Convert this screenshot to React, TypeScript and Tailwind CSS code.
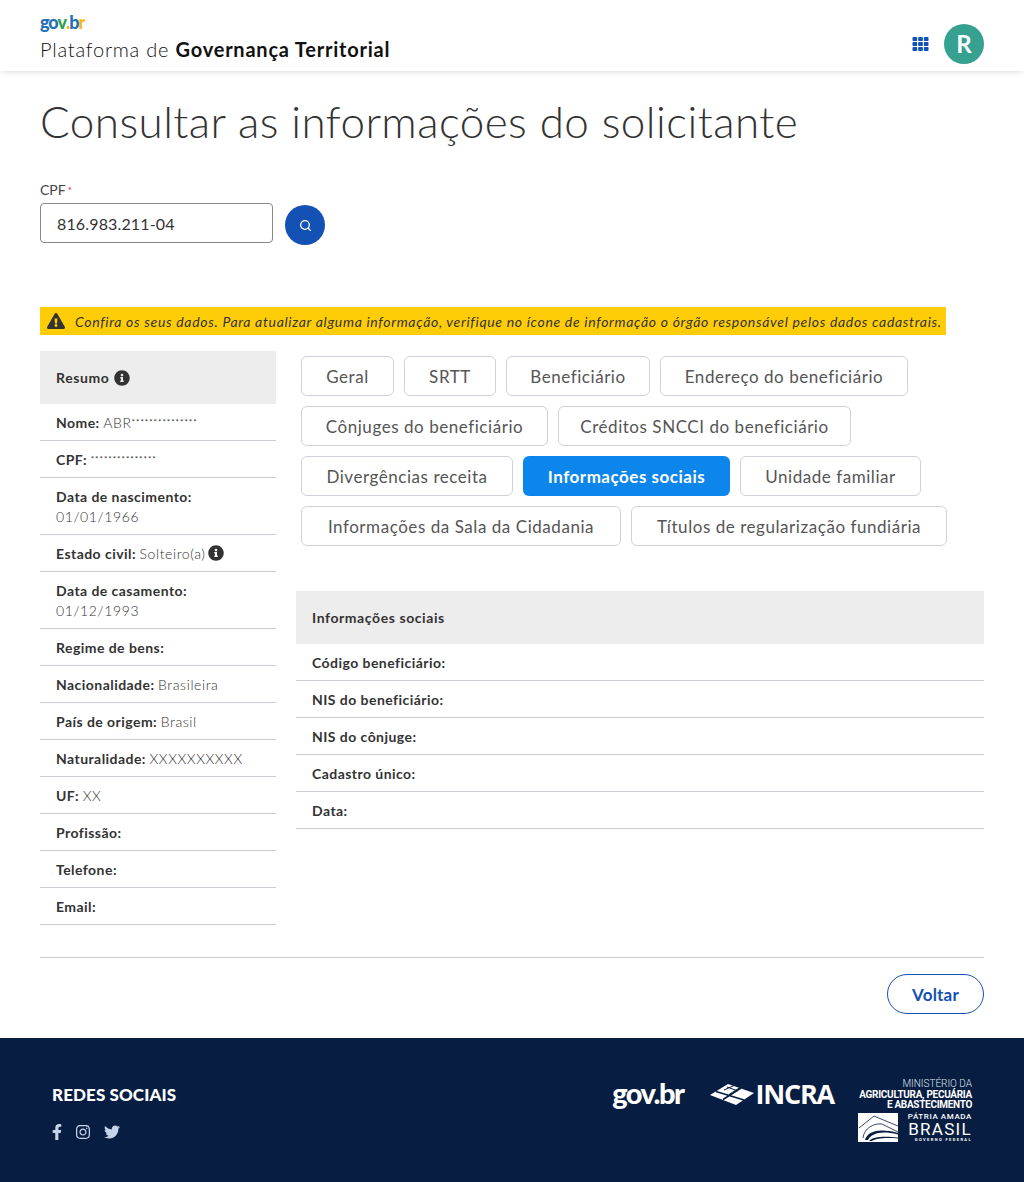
import React from "react";
import { FaInfoCircle, FaExclamationTriangle, FaFacebookF, FaInstagram, FaTwitter, FaTh } from "react-icons/fa";
import { Search } from "lucide-react";

const Info = ({ className = "" }: { className?: string }) => <FaInfoCircle className={`inline-block text-[16px] text-[#333] ${className}`} />;

const Stars = ({ n }: { n: number }) => (
  <span className="text-[8px] leading-[0] align-[3px] tracking-[1px]">{"*".repeat(n)}</span>
);

const summary: { k: string; v?: string; stars?: number; info?: boolean; two?: boolean }[] = [
  { k: "Nome:", v: "ABR", stars: 15 },
  { k: "CPF:", stars: 15 },
  { k: "Data de nascimento:", v: "01/01/1966", two: true },
  { k: "Estado civil:", v: "Solteiro(a)", info: true },
  { k: "Data de casamento:", v: "01/12/1993", two: true },
  { k: "Regime de bens:" },
  { k: "Nacionalidade:", v: "Brasileira" },
  { k: "País de origem:", v: "Brasil" },
  { k: "Naturalidade:", v: "XXXXXXXXXX" },
  { k: "UF:", v: "XX" },
  { k: "Profissão:" },
  { k: "Telefone:" },
  { k: "Email:" },
];

const tabs: [string, string, boolean?][][] = [
  [["Geral", "w-[93px]"], ["SRTT", "w-[92px]"], ["Beneficiário", "w-[144px]"], ["Endereço do beneficiário", "w-[248px]"]],
  [["Cônjuges do beneficiário", "w-[247px]"], ["Créditos SNCCI do beneficiário", "w-[293px]"]],
  [["Divergências receita", "w-[212px]"], ["Informações sociais", "w-[207px]", true], ["Unidade familiar", "w-[181px]"]],
  [["Informações da Sala da Cidadania", "w-[320px]"], ["Títulos de regularização fundiária", "w-[316px]"]],
];

const social = ["Código beneficiário:", "NIS do beneficiário:", "NIS do cônjuge:", "Cadastro único:", "Data:"];

export default function App() {
  return (
    <div className="min-h-[1182px] bg-white text-[#333] font-['Lato','Open_Sans',sans-serif] flex flex-col">
      <header className="h-[71px] bg-white shadow-[0_1px_6px_rgba(51,51,51,0.16)] px-10 flex items-start justify-between">
        <div className="pt-[13px]">
          <div className="h-[18px] flex items-center text-[18px] font-black leading-none tracking-[-1.1px]">
            <span className="text-[#2670b8]">go</span><span className="text-[#2c9f4b]">v</span><span className="text-[#f7b916]">.</span><span className="text-[#2670b8]">b</span><span className="text-[#f7b916]">r</span>
          </div>
          <div className="mt-[5px] text-[20px] leading-[26px] font-light text-[#111] tracking-[0.78px]">
            Plataforma de <span className="font-bold">Governança Territorial</span>
          </div>
        </div>
        <div className="flex items-center gap-[15px] pt-[24px]">
          <FaTh className="text-[16px] text-[#1351b4] w-[17px]" />
          <div className="w-10 h-10 rounded-full bg-[#36a191] text-white flex items-center justify-center text-[24px] font-bold">R</div>
        </div>
      </header>

      <main className="px-10 flex-1">
        <h1 className="mt-[22px] text-[44px] leading-[56px] font-light text-[#333] tracking-[0.44px]">Consultar as informações do solicitante</h1>
        <div className="mt-[31px] text-[14px] leading-5 font-normal text-[#444]">CPF<span className="text-[#e52207] text-[10px] align-top ml-[2px]">*</span></div>
        <div className="mt-[3px] flex items-start gap-3">
          <div className="w-[233px] h-10 pt-[2px] rounded border border-[#888] bg-white pl-4 flex items-center text-[16px] font-normal tracking-[0.15px] text-[#333]">816.983.211-04</div>
          <button className="w-10 h-10 mt-[2px] rounded-full bg-[#1351b4] text-white flex items-center justify-center"><Search size={13} strokeWidth={2.4} /></button>
        </div>

        <div className="mt-[62px] w-[906px] h-[28px] bg-[#ffcd07] flex items-center pl-[7px] text-[14px] italic font-normal text-[#333]">
          <FaExclamationTriangle className="text-[18px] mr-[10px] text-[#333] shrink-0" />
          <span className="whitespace-nowrap tracking-[0.68px]">Confira os seus dados. Para atualizar alguma informação, verifique no ícone de informação o órgão responsável pelos dados cadastrais.</span>
        </div>

        <div className="mt-4 flex gap-5">
          <aside className="w-[236px] shrink-0 text-[14px] leading-5">
            <div className="h-[53px] bg-[#ededed] px-4 flex items-center gap-[5px] font-bold tracking-[0.6px]">Resumo <Info /></div>
            {summary.map((r) => (
              <div key={r.k} className="px-4 pt-[9px] pb-[7px] h-auto border-b border-[#c9ccd1]">
                <span className="font-bold tracking-[0.45px]">{r.k}</span>
                {r.two ? <br /> : r.v || r.stars ? " " : null}
                {r.v && <span className="font-light tracking-[0.6px]">{r.v}</span>}
                {r.stars && <Stars n={r.stars} />}
                {r.info && <Info className="ml-[2px] text-[15px] align-[-2px] leading-[0]" />}
              </div>
            ))}
          </aside>
          <section className="flex-1 min-w-0">
            <div className="pl-[5px] pt-[5px] flex flex-col gap-[10px]">
              {tabs.map((row, i) => (
                <div key={i} className="flex gap-[10px]">
                  {row.map(([t, w, active]) => (
                    <button key={t} className={`${w} h-10 pt-[2px] rounded-md whitespace-nowrap flex items-center justify-center text-[17px] ${active ? "bg-[#0c86ea] text-white font-bold tracking-[0.5px]" : "border border-[#cfd2d8] bg-white text-[#555] font-normal tracking-[0.55px]"}`}>{t}</button>
                  ))}
                </div>
              ))}
            </div>
            <div className="mt-[45px] h-[53px] bg-[#ededed] px-4 flex items-center text-[14px] font-bold tracking-[0.58px]">Informações sociais</div>
            {social.map((s) => (
              <div key={s} className="px-4 pt-[9px] pb-[7px] border-b border-[#c9ccd1] text-[14px] leading-5 font-bold tracking-[0.45px]">{s}</div>
            ))}
          </section>
        </div>

        <div className="mt-8 border-t border-[#c9ccd1] pt-4 flex justify-end">
          <button className="w-[97px] h-10 pt-[2px] rounded-full border border-[#1351b4] text-[#1351b4] text-[17px] font-bold tracking-[0.2px] bg-white">Voltar</button>
        </div>
      </main>

      <footer className="mt-6 h-[144px] bg-[#071d41] text-white pl-[52px] pr-[52px] flex justify-between">
        <div className="pt-[47px]">
          <div className="text-[17px] leading-5 font-black tracking-[0.1px]">REDES SOCIAIS</div>
          <div className="mt-[19px] flex items-center gap-[14px] text-[#c5d4eb] text-[16px]">
            <FaFacebookF className="w-[10px]" /><FaInstagram className="w-[14px]" /><FaTwitter />
          </div>
        </div>
        <div className="pt-[40px] flex items-start">
          <div className="text-[29px] leading-[30px] font-black tracking-[-1.5px] text-white">gov.br</div>
          <div className="ml-[27px] mt-[6px] flex items-start">
            <svg viewBox="0 0 44 21" className="w-[44px] h-[21px] shrink-0">
              <path d="M0 11 L18 0 L44 9 L26 21 Z" fill="#fff" />
              <path d="M6 7.5 L34 16 M31 4 L13 15.5" stroke="#071d41" strokeWidth="1.6" fill="none" />
              <path d="M14 6 L24 1.5 M19 10.5 L30 3.5 M17 3 L28 7" stroke="#071d41" strokeWidth="1" fill="none" />
            </svg>
            <span className="ml-[1px] -mt-[5px] text-[27px] leading-[30px] font-bold text-white font-['Open_Sans',sans-serif] tracking-[-1.2px]">INCRA</span>
          </div>
          <div className="ml-[26px] mt-[1px] flex flex-col items-end w-[112px]">
            <div className="text-[10px] leading-[10.5px] text-right font-light text-[#dfe5ef] font-['Roboto',sans-serif] whitespace-nowrap">MINISTÉRIO DA</div>
            <div className="text-[10px] leading-[10.5px] text-right font-bold text-white font-['Roboto',sans-serif] whitespace-nowrap tracking-[-0.3px]">AGRICULTURA, PECUÁRIA</div>
            <div className="text-[10px] leading-[10.5px] text-right font-bold text-white font-['Roboto',sans-serif] whitespace-nowrap tracking-[-0.3px]">E ABASTECIMENTO</div>
            <div className="mt-[2px] w-[114px] flex items-stretch gap-[5px]">
              <svg viewBox="0 0 40 29" className="w-[40px] h-[29px] shrink-0">
                <rect width="40" height="29" fill="#fff" />
                <path d="M1 15 L16 3 L40 13" stroke="#071d41" strokeWidth="0.8" fill="none" />
                <path d="M5 25 C6 15 16 10 24 11 L40 19" stroke="#071d41" strokeWidth="0.8" fill="none" />
                <path d="M7 27 C9 20 18 14 40 20 L40 21.5 C22 17 13 21 10 27 Z" fill="#071d41" />
                <path d="M11 28 C15 24 24 23 40 24.5 L40 25.5 C26 24.5 18 25.5 14 28 Z" fill="#071d41" />
              </svg>
              <div className="flex-1 min-w-0 text-right text-white font-['Roboto',sans-serif] whitespace-nowrap">
                <div className="text-[8px] leading-[8px] font-medium tracking-[0.6px]">PÁTRIA AMADA</div>
                <div className="text-[17px] leading-[17px] font-normal tracking-[1.3px]">BRASIL</div>
                <div className="text-[4px] leading-[4px] font-bold tracking-[1.4px]">GOVERNO FEDERAL</div>
              </div>
            </div>
          </div>
        </div>
      </footer>
    </div>
  );
}
